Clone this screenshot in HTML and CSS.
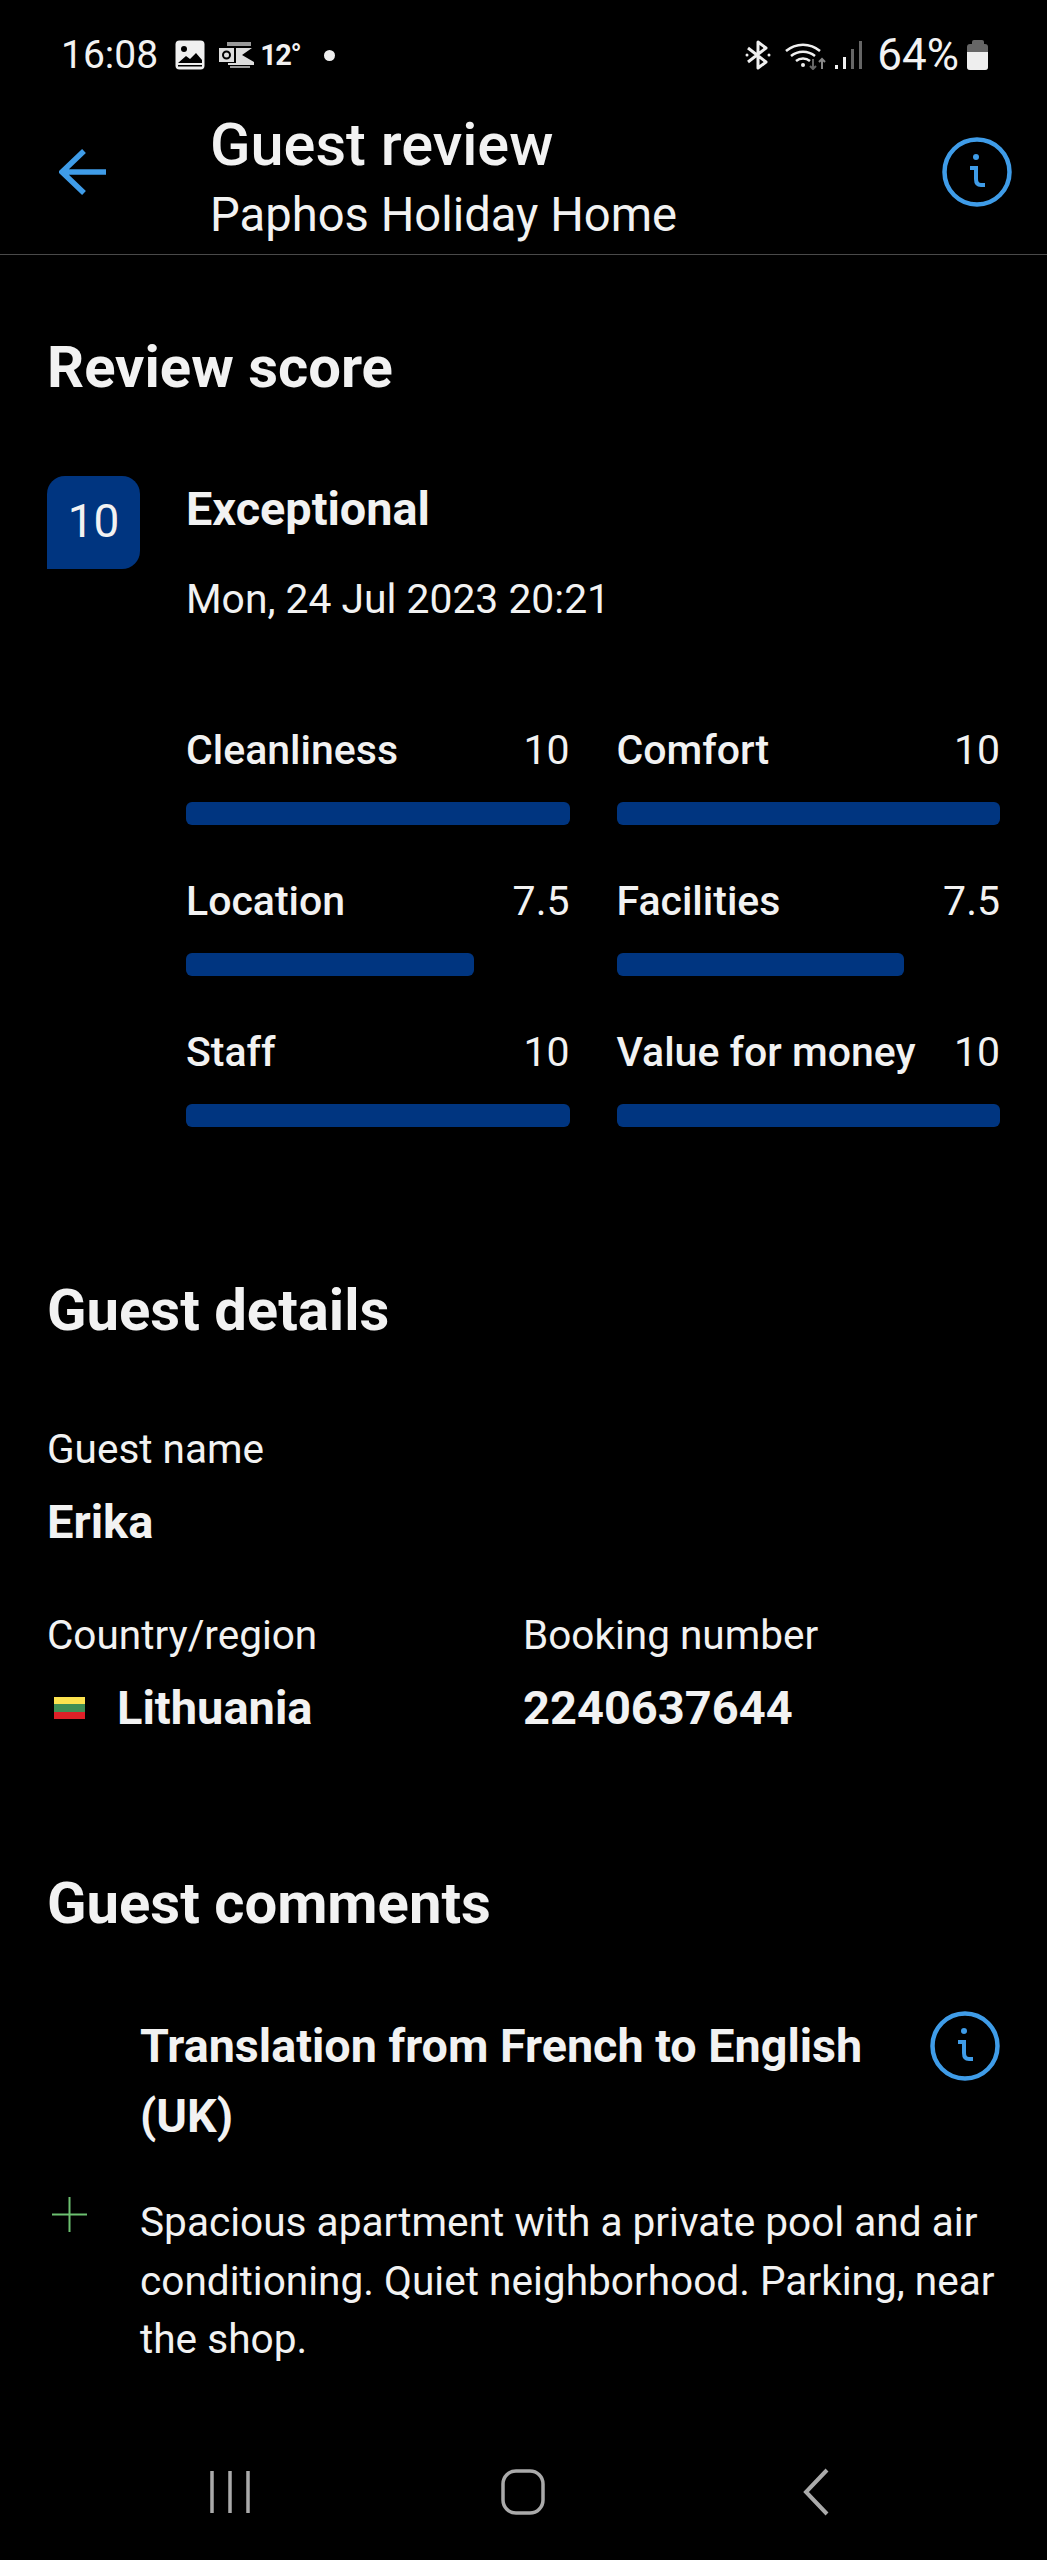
FILE: index.html
```html
<!DOCTYPE html>
<html lang="en">
<head>
  <meta charset="UTF-8">
  <meta name="viewport" content="width=device-width, initial-scale=1.0">
  <title>Guest review</title>
  <link rel="stylesheet" href="styles.css">
</head>
<body>
  <div class="status-bar">
    <span class="status-time">16:08</span>
    <svg class="icon-picture" width="30" height="30" viewBox="0 0 30 30">
      <rect x="0.500" y="0.500" width="29" height="29" rx="4" fill="#f0f0f0"/>
      <circle cx="9" cy="9" r="3" fill="#000"/>
      <path d="M3 23l8-7 4 3 6-6 6 7v3H3z" fill="#000"/>
      <path d="M3 25h24v1.500H3z" fill="#000"/>
    </svg>
    <svg class="icon-outlook" width="36" height="28" viewBox="0 0 36 28">
      <rect x="9" y="1" width="24" height="4" fill="#999"/>
      <rect x="1" y="7" width="15" height="14" fill="#ddd"/>
      <circle cx="8.500" cy="14" r="3.500" fill="none" stroke="#000" stroke-width="2"/>
      <path d="M18 7h16l-10 7 12 7v3H10v-2h8z" fill="#ddd"/>
      <path d="M12 25h20v2H12z" fill="#999"/>
    </svg>
    <span class="status-temp">12°</span>
    <span class="status-dot"></span>
    <span class="status-spacer"></span>
    <svg class="icon-bt" width="26" height="30" viewBox="0 0 26 30">
      <path d="M3 8l18 14-8 6V2l8 6L3 22" fill="none" stroke="#f0f0f0" stroke-width="3" stroke-linejoin="round"/>
      <circle cx="2" cy="15" r="1.500" fill="#f0f0f0"/>
      <circle cx="24" cy="15" r="1.500" fill="#f0f0f0"/>
    </svg>
    <svg class="icon-wifi" width="42" height="30" viewBox="0 0 42 30">
      <path d="M1 11a26 26 0 0 1 34 0M6 16a19 19 0 0 1 24 0M11 21a11 11 0 0 1 14 0" fill="none" stroke="#f0f0f0" stroke-width="2.500"/>
      <circle cx="18" cy="25" r="2" fill="#f0f0f0"/>
      <path d="M28 19v10M25 26l3 3 3-3" fill="none" stroke="#666" stroke-width="2"/>
      <path d="M37 29V19M34 22l3-3 3 3" fill="none" stroke="#888" stroke-width="2"/>
    </svg>
    <svg class="icon-signal" width="27" height="30" viewBox="0 0 27 30">
      <rect x="0" y="25" width="3" height="4" fill="#f0f0f0"/>
      <rect x="8" y="17" width="3" height="12" fill="#f0f0f0"/>
      <rect x="16" y="9" width="3" height="20" fill="#666"/>
      <rect x="24" y="1" width="3" height="28" fill="#666"/>
    </svg>
    <span class="status-battery-text">64%</span>
    <span class="battery">
      <span class="battery-cap"></span>
      <span class="battery-body"><span class="battery-fill"></span></span>
    </span>
  </div>

  <header class="app-header">
    <svg class="back-arrow" width="48" height="46" viewBox="0 0 48 46">
      <path d="M47 23H3M25 2L3 23l22 21" fill="none" stroke="#3f9ce8" stroke-width="5.500"/>
    </svg>
    <div class="header-titles">
      <div class="header-title">Guest review</div>
      <div class="header-sub">Paphos Holiday Home</div>
    </div>
    <svg class="info-icon header-info" width="70" height="70" viewBox="0 0 70 70">
      <circle cx="35" cy="35" r="32.500" fill="none" stroke="#3f9ce8" stroke-width="4.500"/>
      <circle cx="34" cy="20" r="3" fill="#3f9ce8"/>
      <path d="M28 31h6v11c0 4 2 6 5 6h4" fill="none" stroke="#3f9ce8" stroke-width="4"/>
    </svg>
  </header>

  <main class="content">
    <h2 class="section-title score-title">Review score</h2>
    <section class="score-row">
      <div class="score-badge">10</div>
      <div class="score-body">
        <div class="score-word">Exceptional</div>
        <div class="score-date">Mon, 24 Jul 2023 20:21</div>
        <div class="ratings">
          <div class="rating">
            <div class="rating-top"><span>Cleanliness</span><span>10</span></div>
            <div class="bar-track"><div class="bar-fill" style="width: 100%"></div></div>
          </div>
          <div class="rating">
            <div class="rating-top"><span>Comfort</span><span>10</span></div>
            <div class="bar-track"><div class="bar-fill" style="width: 100%"></div></div>
          </div>
          <div class="rating">
            <div class="rating-top"><span>Location</span><span>7.5</span></div>
            <div class="bar-track"><div class="bar-fill" style="width: 75%"></div></div>
          </div>
          <div class="rating">
            <div class="rating-top"><span>Facilities</span><span>7.5</span></div>
            <div class="bar-track"><div class="bar-fill" style="width: 75%"></div></div>
          </div>
          <div class="rating">
            <div class="rating-top"><span>Staff</span><span>10</span></div>
            <div class="bar-track"><div class="bar-fill" style="width: 100%"></div></div>
          </div>
          <div class="rating">
            <div class="rating-top"><span>Value for money</span><span>10</span></div>
            <div class="bar-track"><div class="bar-fill" style="width: 100%"></div></div>
          </div>
        </div>
      </div>
    </section>

    <h2 class="section-title details-title">Guest details</h2>
    <div class="detail-label first-label">Guest name</div>
    <div class="detail-value">Erika</div>
    <div class="detail-cols">
      <div class="detail-col">
        <div class="detail-label">Country/region</div>
        <div class="detail-value country">
          <span class="flag"><i class="flag-y"></i><i class="flag-g"></i><i class="flag-r"></i></span>
          Lithuania
        </div>
      </div>
      <div class="detail-col">
        <div class="detail-label">Booking number</div>
        <div class="detail-value">2240637644</div>
      </div>
    </div>

    <h2 class="section-title comments-title">Guest comments</h2>
    <div class="translation">
      <div class="translation-text">Translation from French to English (UK)</div>
      <svg class="info-icon" width="70" height="70" viewBox="0 0 70 70">
        <circle cx="35" cy="35" r="32.500" fill="none" stroke="#3f9ce8" stroke-width="4.500"/>
        <circle cx="34" cy="20" r="3" fill="#3f9ce8"/>
        <path d="M28 31h6v11c0 4 2 6 5 6h4" fill="none" stroke="#3f9ce8" stroke-width="4"/>
      </svg>
    </div>
    <div class="comment">
      <svg class="plus" width="35" height="35" viewBox="0 0 35 35">
        <path d="M17.500 0v35M0 17.500h35" fill="none" stroke="#6cc070" stroke-width="2"/>
      </svg>
      <p class="comment-text">Spacious apartment with a private pool and air conditioning. Quiet neighborhood. Parking, near the shop.</p>
    </div>
  </main>

  <nav class="nav-bar">
    <svg width="42" height="46" viewBox="0 0 42 46">
      <path d="M3 2v42M21 2v42M39 2v42" fill="none" stroke="#aaa" stroke-width="3.500"/>
    </svg>
    <svg width="44" height="46" viewBox="0 0 44 46">
      <rect x="2" y="2" width="40" height="42" rx="13" fill="none" stroke="#aaa" stroke-width="3.500"/>
    </svg>
    <svg width="26" height="48" viewBox="0 0 26 48">
      <path d="M24 2L3 24l21 22" fill="none" stroke="#aaa" stroke-width="4"/>
    </svg>
  </nav>
</body>
</html>
```

FILE: styles.css
```css
* {
  box-sizing: border-box;
}
body {
  font-family: Roboto, sans-serif;
  display: flex;
  flex-direction: column;
  width: 1047px;
  height: 2560px;
  margin: 0;
  overflow: hidden;
  background-color: #000;
  color: #f2f2f2;
}

/* status bar */
.status-bar {
  display: flex;
  align-items: center;
  height: 110px;
  padding: 0 59px 0 61px;
  font-size: 39px;
}
.status-time {
  margin-right: 17px;
}
.icon-outlook {
  margin-left: 13px;
}
.status-temp {
  margin-left: 6px;
  font-size: 29px;
  font-weight: 700;
  letter-spacing: -1.500px;
}
.status-dot {
  width: 11px;
  height: 11px;
  margin-left: 24px;
  border-radius: 50%;
  background: #f0f0f0;
}
.status-spacer {
  flex: 1;
}
.icon-wifi {
  margin-left: 14px;
}
.icon-signal {
  margin-left: 8px;
}
.status-battery-text {
  margin-left: 15px;
  font-size: 44px;
}
.battery {
  display: flex;
  flex-direction: column;
  align-items: center;
  width: 21px;
  height: 30px;
  margin-left: 8px;
}
.battery-cap {
  width: 12px;
  height: 4px;
  border-radius: 2px 2px 0 0;
  background: #666;
}
.battery-body {
  display: flex;
  align-items: flex-end;
  width: 100%;
  flex: 1;
  border-radius: 3px;
  background: #666;
  overflow: hidden;
}
.battery-fill {
  width: 100%;
  height: 68%;
  background: #eee;
}

/* header */
.app-header {
  display: flex;
  align-items: flex-start;
  height: 145px;
  padding: 0 35px 0 59px;
  border-bottom: 1px solid #4a4a4a;
}
.back-arrow {
  margin-top: 39px;
}
.header-titles {
  flex: 1;
  margin-left: 103px;
}
.header-title {
  font-size: 59.500px;
  font-weight: 500;
  line-height: 70px;
}
.header-sub {
  font-size: 47.200px;
  line-height: 70px;
}
.header-info {
  margin-top: 27px;
}

/* main */
.content {
  flex: 1;
  padding: 0 47px;
}
.section-title {
  margin: 0;
  font-size: 58px;
  font-weight: 700;
  line-height: 70px;
}
.score-title {
  margin-top: 77px;
}
.score-row {
  display: flex;
  margin-top: 74px;
}
.score-badge {
  flex: none;
  width: 93px;
  height: 93px;
  border-radius: 18px 18px 18px 0;
  background: #003580;
  font-size: 46px;
  line-height: 91px;
  text-align: center;
}
.score-body {
  flex: 1;
  margin-left: 46px;
}
.score-word {
  margin-top: 3px;
  font-size: 46.800px;
  font-weight: 700;
  line-height: 60px;
}
.score-date {
  margin-top: 30px;
  font-size: 40.800px;
  line-height: 60px;
}
.ratings {
  display: grid;
  grid-template-columns: 383.500px 383.500px;
  column-gap: 47px;
  row-gap: 51px;
  margin-top: 96px;
}
.rating-top {
  display: flex;
  justify-content: space-between;
  font-size: 41px;
  font-weight: 500;
  line-height: 50px;
}
.rating-top span + span {
  font-weight: 400;
}
.bar-track {
  height: 23px;
  margin-top: 27px;
}
.bar-fill {
  height: 100%;
  border-radius: 6px;
  background: #003580;
}

.details-title {
  margin-top: 148px;
}
.detail-label {
  font-size: 40.500px;
  line-height: 50px;
}
.first-label {
  margin-top: 79px;
}
.detail-value {
  margin-top: 18px;
  font-size: 47px;
  font-weight: 700;
  line-height: 60px;
}
.detail-cols {
  display: flex;
  margin-top: 58px;
}
.detail-col {
  width: 476px;
}
.country {
  display: flex;
  align-items: center;
}
.flag {
  display: flex;
  flex-direction: column;
  width: 31px;
  height: 22px;
  margin: 0 32px 0 7px;
}
.flag i {
  flex: 1;
}
.flag-y {
  background: #fce34f;
}
.flag-g {
  background: #3f8f55;
}
.flag-r {
  background: #dd2027;
}

.comments-title {
  margin-top: 130px;
}
.translation {
  display: flex;
  justify-content: space-between;
  margin-top: 73px;
  padding-left: 93px;
}
.translation-text {
  width: 770px;
  font-size: 46.700px;
  font-weight: 700;
  line-height: 70px;
}
.comment {
  display: flex;
  margin-top: 42px;
  padding-left: 5px;
}
.plus {
  flex: none;
  margin: 4px 53px 0 0;
}
.comment-text {
  margin: 0;
  font-size: 40.600px;
  line-height: 58.500px;
}

/* bottom nav */
.nav-bar {
  display: grid;
  grid-template-columns: repeat(3, 293px);
  justify-content: center;
  justify-items: center;
  align-items: center;
  height: 136px;
  margin-left: -2px;
}
```
